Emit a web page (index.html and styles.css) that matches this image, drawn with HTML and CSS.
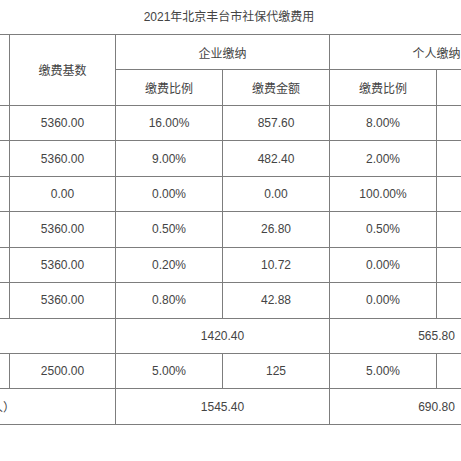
FILE: index.html
```html
<!DOCTYPE html>
<html lang="zh-CN">
<head>
<meta charset="utf-8">
<title>2021年北京丰台市社保代缴费用</title>
<link rel="stylesheet" href="styles.css">
</head>
<body>
<div class="page">
  <div class="title">2021年北京丰台市社保代缴费用</div>
  <table class="fee">
    <colgroup>
      <col class="c-name">
      <col class="c-base">
      <col class="c-num">
      <col class="c-num">
      <col class="c-num">
      <col class="c-num">
    </colgroup>
    <tr>
      <td rowspan="2">险种</td>
      <td rowspan="2">缴费基数</td>
      <td colspan="2">企业缴纳</td>
      <td colspan="2">个人缴纳</td>
    </tr>
    <tr>
      <td>缴费比例</td>
      <td>缴费金额</td>
      <td>缴费比例</td>
      <td>缴费金额</td>
    </tr>
    <tr><td>养老保险</td><td>5360.00</td><td>16.00%</td><td>857.60</td><td>8.00%</td><td>428.80</td></tr>
    <tr><td>医疗保险</td><td>5360.00</td><td>9.00%</td><td>482.40</td><td>2.00%</td><td>110.20</td></tr>
    <tr><td>大额医疗</td><td>0.00</td><td>0.00%</td><td>0.00</td><td>100.00%</td><td>0.00</td></tr>
    <tr><td>失业保险</td><td>5360.00</td><td>0.50%</td><td>26.80</td><td>0.50%</td><td>26.80</td></tr>
    <tr><td>工伤保险</td><td>5360.00</td><td>0.20%</td><td>10.72</td><td>0.00%</td><td>0.00</td></tr>
    <tr><td>生育保险</td><td>5360.00</td><td>0.80%</td><td>42.88</td><td>0.00%</td><td>0.00</td></tr>
    <tr><td colspan="2">小计</td><td colspan="2">1420.40</td><td colspan="2">565.80</td></tr>
    <tr><td>住房公积金</td><td>2500.00</td><td>5.00%</td><td>125</td><td>5.00%</td><td>125</td></tr>
    <tr><td colspan="2" class="total-label">合计（企业+个人）</td><td colspan="2">1545.40</td><td colspan="2">690.80</td></tr>
  </table>
</div>
</body>
</html>
```

FILE: styles.css
```css
html, body {
  margin: 0;
  padding: 0;
  background: #ffffff;
}

.page {
  width: 461px;
  height: 461px;
  overflow: hidden;
  font-family: "Liberation Sans", "Noto Sans CJK SC", sans-serif;
  font-size: 12px;
  color: #444444;
}

.title {
  height: 34px;
  line-height: 34px;
  text-align: center;
  padding-right: 3px;
}

.fee {
  border-collapse: collapse;
  table-layout: fixed;
  width: 729px;
  margin-left: -186px;
}

.c-name { width: 195px; }
.c-base { width: 106px; }
.c-num { width: 107px; }

.fee tr {
  height: 35.45px;
}

.fee td {
  border: 1px solid #7d7d7d;
  text-align: center;
  vertical-align: middle;
  padding: 0;
  white-space: nowrap;
  overflow: hidden;
}

.fee td.total-label {
  padding-right: 3px;
}
```
